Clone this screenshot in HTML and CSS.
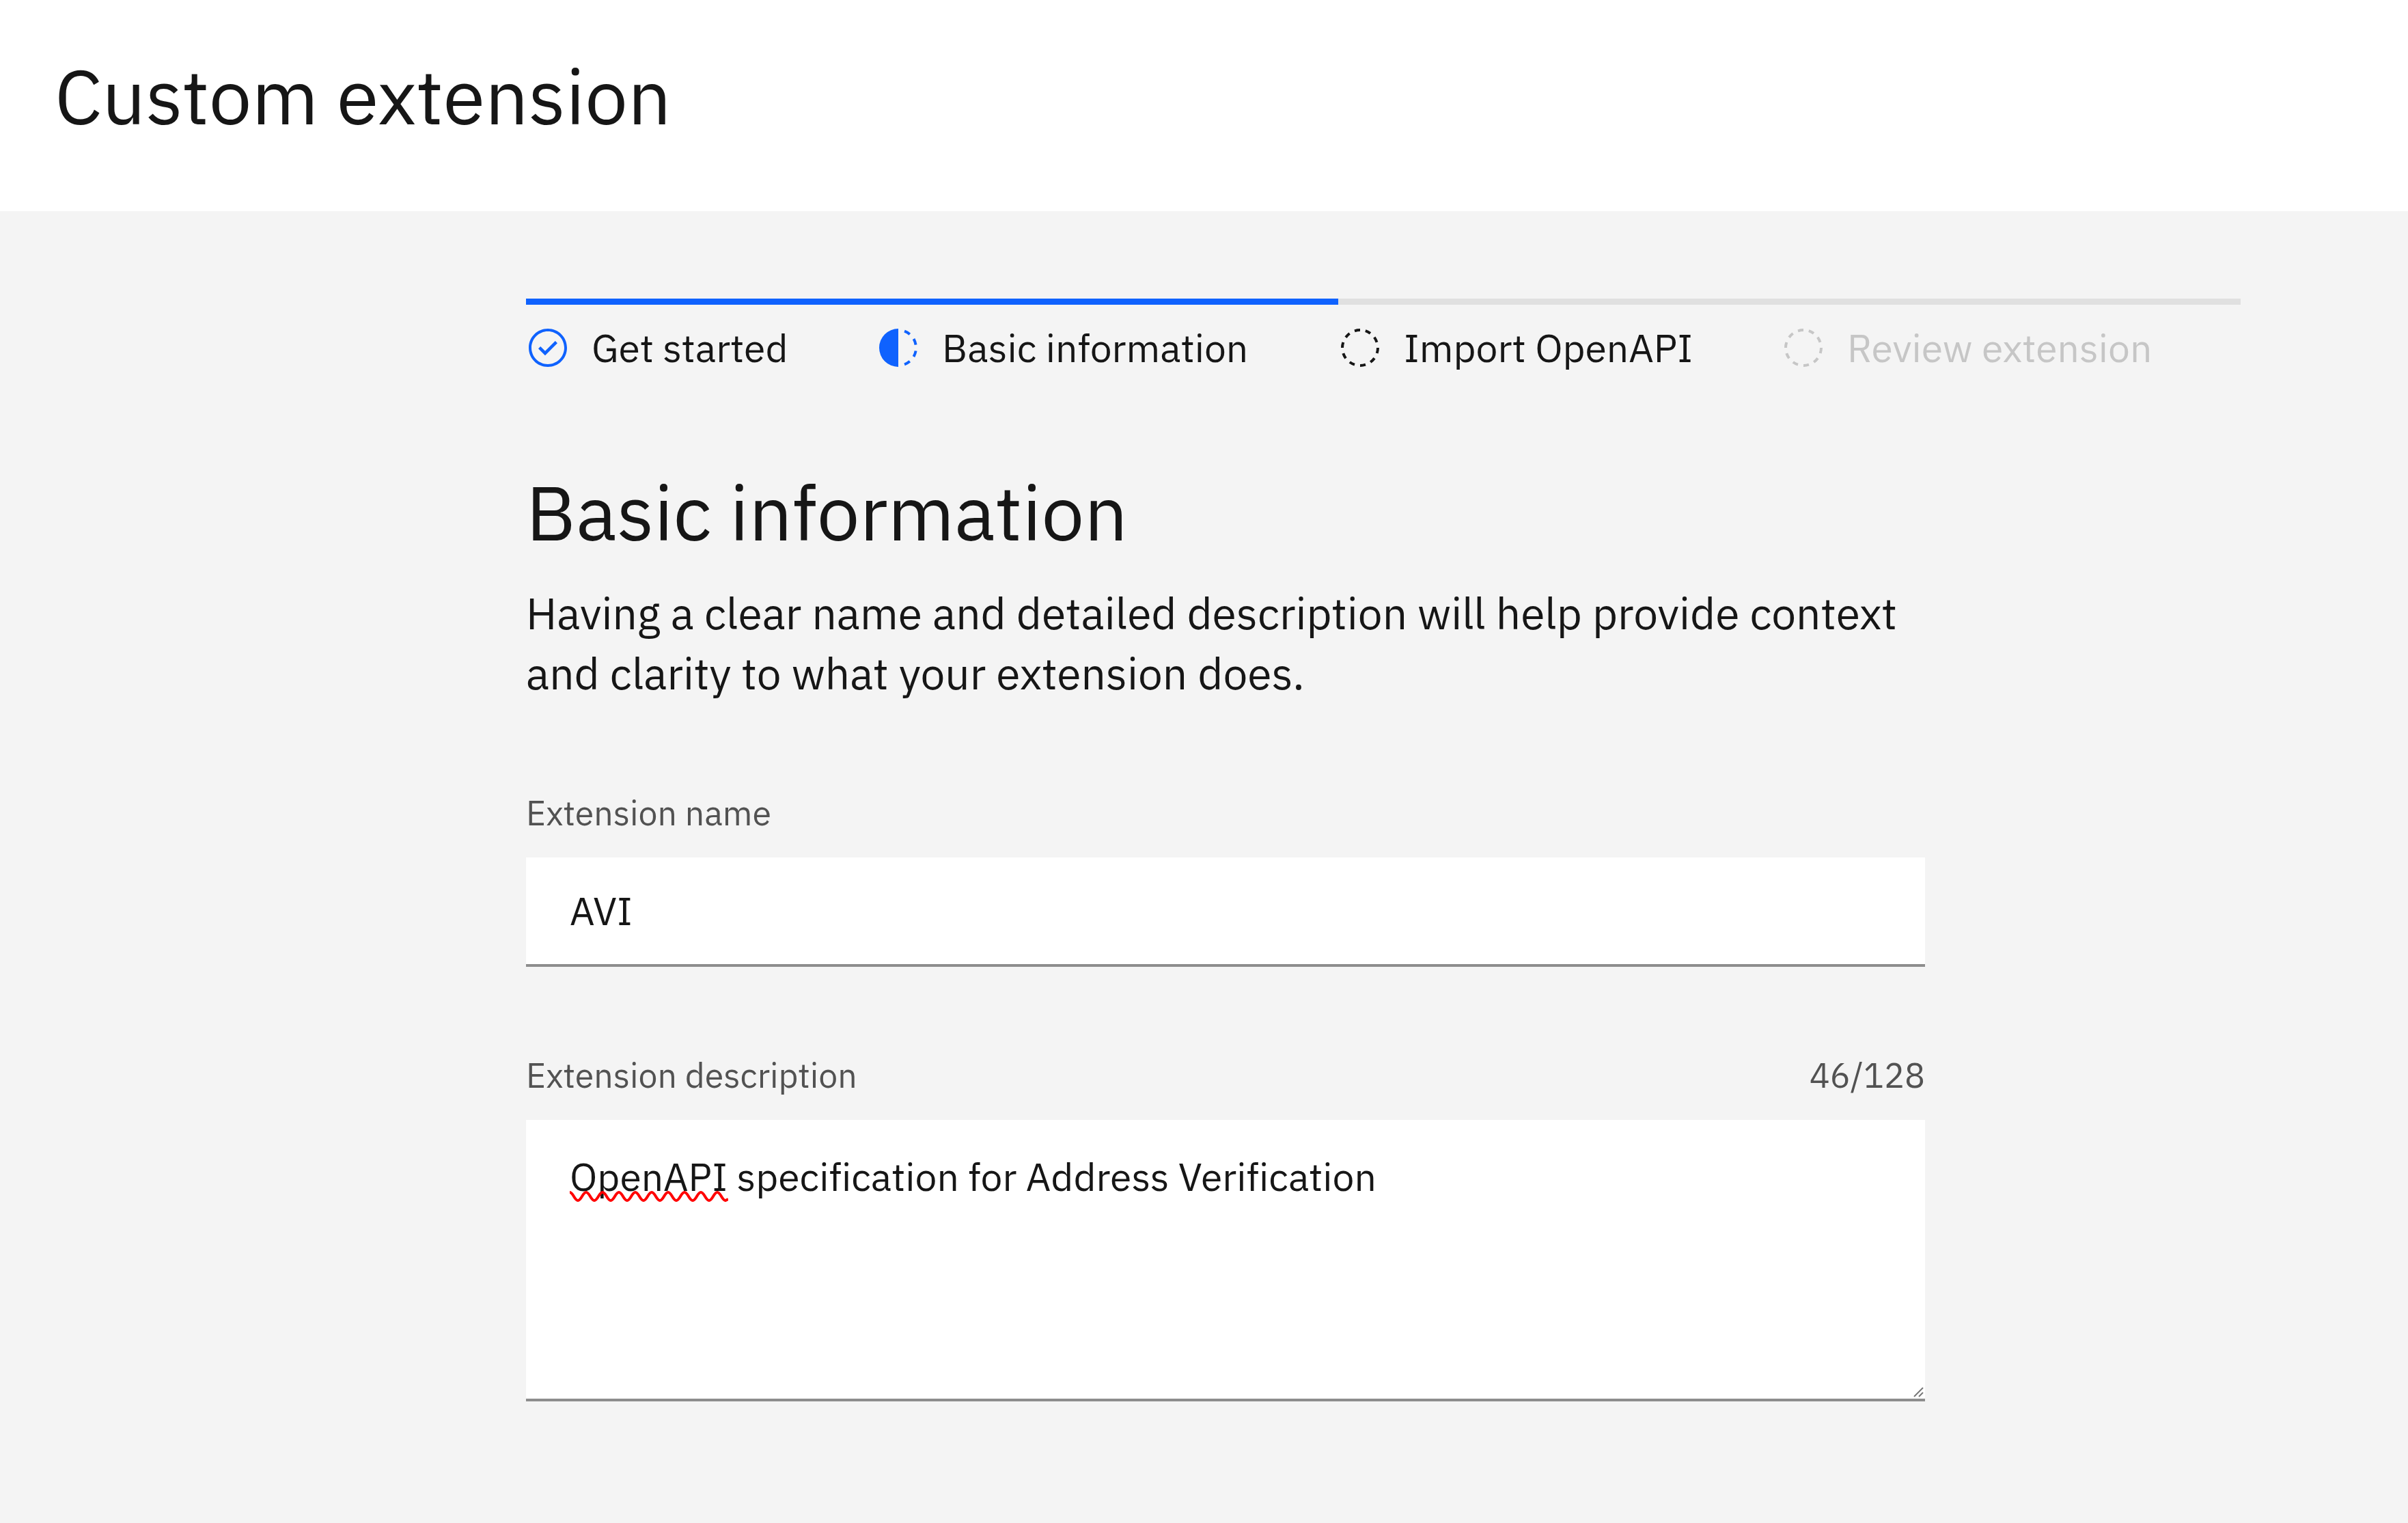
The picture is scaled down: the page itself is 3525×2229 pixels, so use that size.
FILE: index.html
```html
<!DOCTYPE html>
<html lang="en">
<head>
<meta charset="utf-8">
<title>Custom extension</title>
<link rel="stylesheet" href="styles.css">
</head>
<body>
<header class="page-header">
  <h1 class="heading">Custom extension</h1>
</header>
<main class="page-main">
  <ol class="progress">
    <li class="step step-done">
      <svg class="step-icon" viewBox="0 0 16 16" aria-hidden="true"><path d="M8 1C4.100 1 1 4.100 1 8s3.100 7 7 7 7-3.100 7-7-3.100-7-7-7zm0 13c-3.300 0-6-2.700-6-6s2.700-6 6-6 6 2.700 6 6-2.700 6-6 6z"/><path d="M7 10.800 4.500 8.300l.8-.8L7 9.200l3.700-3.700.8.8z"/></svg>
      <span class="step-label">Get started</span>
    </li>
    <li class="step step-current" aria-current="step">
      <svg class="step-icon" viewBox="0 0 32 32" aria-hidden="true"><path d="M23.764 6.859l1.285-1.531A13.976 13.976 0 0 0 20.867 2.887l-.683 1.878A11.973 11.973 0 0 1 23.764 6.859zM27.810 14l1.968-.413A13.889 13.889 0 0 0 28.140 9.046L26.409 10A12.520 12.520 0 0 1 27.810 14zM20.184 27.235l.683 1.878a13.976 13.976 0 0 0 4.182-2.441l-1.285-1.531A11.973 11.973 0 0 1 20.184 27.235zM26.409 22L28.140 23a14.140 14.140 0 0 0 1.638-4.587L27.810 18.066A12.152 12.152 0 0 1 26.409 22zM16 30V2a14 14 0 0 0 0 28z"/></svg>
      <span class="step-label">Basic information</span>
    </li>
    <li class="step">
      <svg class="step-icon" viewBox="0 0 32 32" aria-hidden="true"><path id="dash-ring" d="M7.700 4.700a14.700 14.700 0 0 0-3 3.100L6.300 9A13.260 13.260 0 0 1 8.900 6.300zM4.600 12.300l-1.900-.6A12.510 12.510 0 0 0 2 16H4A11.480 11.480 0 0 1 4.600 12.300zM2.700 20.400a14.400 14.400 0 0 0 2 3.900l1.600-1.200a12.890 12.890 0 0 1-1.700-3.300zM7.800 27.300a14.400 14.400 0 0 0 3.900 2l.6-1.900A12.890 12.890 0 0 1 9 25.700zM11.700 2.700l.6 1.900A11.480 11.480 0 0 1 16 4V2A12.510 12.510 0 0 0 11.700 2.700zM24.200 27.300a15.180 15.180 0 0 0 3.100-3.100L25.700 23A11.530 11.530 0 0 1 23 25.700zM27.400 19.700l1.900.6A15.470 15.470 0 0 0 30 16H28A11.480 11.480 0 0 1 27.400 19.700zM29.200 11.600a14.400 14.400 0 0 0-2-3.900L25.600 8.900a12.890 12.890 0 0 1 1.700 3.300zM24.100 4.600a14.400 14.400 0 0 0-3.900-2l-.6 1.900a12.890 12.890 0 0 1 3.300 1.700zM20.300 29.300l-.6-1.900A11.480 11.480 0 0 1 16 28v2A21.420 21.420 0 0 0 20.300 29.300z"/></svg>
      <span class="step-label">Import OpenAPI</span>
    </li>
    <li class="step step-disabled" aria-disabled="true">
      <svg class="step-icon" viewBox="0 0 32 32" aria-hidden="true"><use href="#dash-ring"/></svg>
      <span class="step-label">Review extension</span>
    </li>
  </ol>
  <form class="form">
    <h2 class="heading">Basic information</h2>
    <p class="intro">Having a clear name and detailed description will help provide context and clarity to what your extension does.</p>
    <div class="field">
      <div class="field-head"><label for="ext-name">Extension name</label></div>
      <input class="control" id="ext-name" type="text" value="AVI">
    </div>
    <div class="field">
      <div class="field-head"><label for="ext-desc">Extension description</label><span>46/128</span></div>
      <div class="area-wrap">
        <textarea class="control area" id="ext-desc" maxlength="128" spellcheck="false">OpenAPI specification for Address Verification</textarea>
        <svg class="squiggle" viewBox="0 0 232 20" aria-hidden="true"><path d="M0 4C5 4 7 16 12 16S19 4 24 4S31 16 36 16S43 4 48 4S55 16 60 16S67 4 72 4S79 16 84 16S91 4 96 4S103 16 108 16S115 4 120 4S127 16 132 16S139 4 144 4S151 16 156 16S163 4 168 4S175 16 180 16S187 4 192 4S199 16 204 16S211 4 216 4S223 16 228 16L232 14"/></svg>
        <svg class="grip" viewBox="0 0 16 16" aria-hidden="true"><path d="M1 14 14 1M8 14l6-6"/></svg>
      </div>
    </div>
  </form>
</main>
</body>
</html>
```
FILE: styles.css
```css
* {
  box-sizing: border-box;
}

body {
  margin: 0;
  min-height: 100vh;
  background: #f4f4f4;
  color: #161616;
  font-family: "IBM Plex Sans", "Noto Sans", sans-serif;
  font-variant-ligatures: none;
}

.page-header {
  padding: 68px 80px 97px;
  background: #fff;
}

.heading {
  margin: 0;
  font-size: 112px;
  font-weight: 400;
  line-height: 144px;
}

.page-main {
  padding: 128px 245px 176px 770px;
}

.progress {
  display: grid;
  grid-template-columns: 513fr 676fr 649fr 672fr;
  margin: 0 0 136px;
  padding: 0;
  list-style: none;
}

.step {
  display: flex;
  align-items: center;
  gap: 32px;
  padding-top: 31px;
  border-top: 9px solid #e0e0e0;
}

.step-done,
.step-current {
  border-color: #0f62fe;
}

.step-icon {
  flex: none;
  width: 64px;
  height: 64px;
  fill: #161616;
}

.step-done .step-icon,
.step-current .step-icon {
  fill: #0f62fe;
}

.step-disabled .step-icon {
  fill: #c6c6c6;
}

.step-label {
  font-size: 57px;
  line-height: 64px;
  white-space: nowrap;
}

.step-disabled .step-label {
  color: #c6c6c6;
}

.form {
  max-width: 2048px;
}

.intro {
  margin: 32px 0 130px;
  font-size: 64px;
  line-height: 88px;
}

.field + .field {
  margin-top: 128px;
}

.field-head {
  display: flex;
  justify-content: space-between;
  margin-bottom: 34px;
  color: #525252;
  font-size: 50px;
  line-height: 62px;
}

.control {
  display: block;
  width: 100%;
  height: 160px;
  padding: 0 64px;
  border: 0;
  border-bottom: 4px solid #8d8d8d;
  border-radius: 0;
  outline: 0;
  background: #fff;
  color: #161616;
  font: inherit;
  font-size: 57px;
  font-variant-ligatures: none;
}

.area-wrap {
  position: relative;
}

.area {
  height: 412px;
  padding: 48px 64px;
  line-height: 70px;
  resize: none;
}

.squiggle {
  position: absolute;
  top: 102px;
  left: 64px;
  width: 232px;
  height: 20px;
  fill: none;
  stroke: #f00;
  stroke-width: 4;
}

.grip {
  position: absolute;
  right: 1px;
  bottom: 5px;
  width: 16px;
  height: 16px;
  fill: none;
  stroke: #777;
  stroke-width: 2;
}
```
